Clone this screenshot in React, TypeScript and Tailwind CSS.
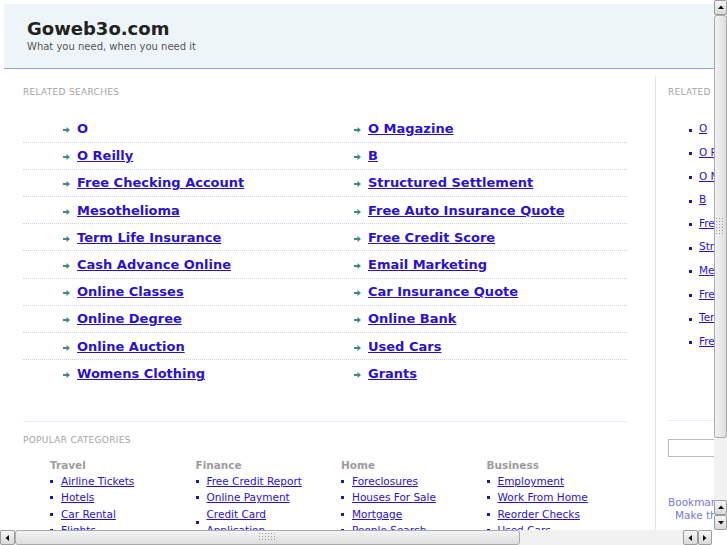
import React from 'react';

const searchRows: [string, string][] = [
  ['O', 'O Magazine'],
  ['O Reilly', 'B'],
  ['Free Checking Account', 'Structured Settlement'],
  ['Mesothelioma', 'Free Auto Insurance Quote'],
  ['Term Life Insurance', 'Free Credit Score'],
  ['Cash Advance Online', 'Email Marketing'],
  ['Online Classes', 'Car Insurance Quote'],
  ['Online Degree', 'Online Bank'],
  ['Online Auction', 'Used Cars'],
  ['Womens Clothing', 'Grants'],
];

const sideLinks = [
  'O',
  'O Reilly',
  'O Magazine',
  'B',
  'Free Checking Account',
  'Structured Settlement',
  'Mesothelioma',
  'Free Auto Insurance Quote',
  'Term Life Insurance',
  'Free Credit Score',
];

const categories = [
  { title: 'Travel', items: ['Airline Tickets', 'Hotels', 'Car Rental', 'Flights'] },
  { title: 'Finance', items: ['Free Credit Report', 'Online Payment', 'Credit Card Application'] },
  { title: 'Home', items: ['Foreclosures', 'Houses For Sale', 'Mortgage', 'People Search'] },
  { title: 'Business', items: ['Employment', 'Work From Home', 'Reorder Checks', 'Used Cars'] },
];

function Arrow() {
  return (
    <svg width="7" height="6" viewBox="0 0 7 6" className="shrink-0 mt-[2px]">
      <rect x="0" y="2" width="4" height="2" fill="#3d8a84" />
      <path d="M3.5 0 L7 3 L3.5 6 Z" fill="#3d8a84" />
    </svg>
  );
}

function SearchCell({ label, first }: { label: string; first?: boolean }) {
  return (
    <div className={`flex items-center gap-[7px] ${first ? 'w-[317px] pl-[40px]' : 'pl-[14px]'}`}>
      <Arrow />
      <a
        href="#"
        className={`text-[13px] leading-[16px] font-bold text-[#2a12cc] whitespace-nowrap ${
          label === 'O' ? 'no-underline' : 'underline'
        }`}
      >
        {label}
      </a>
    </div>
  );
}

// fake browser scrollbar pieces
function ScrollButton({ dir, className = '' }: { dir: 'up' | 'down' | 'left' | 'right'; className?: string }) {
  const paths = {
    up: 'M1 5 L4 1.5 L7 5 Z',
    down: 'M1 2 L4 5.5 L7 2 Z',
    left: 'M5 1 L1.5 4 L5 7 Z',
    right: 'M2 1 L5.5 4 L2 7 Z',
  };
  return (
    <div
      className={`flex items-center justify-center border border-[#9c9c9c] rounded-[2px] bg-gradient-to-b from-[#f6f6f6] to-[#d9d9d9] ${className}`}
    >
      <svg width="8" height="8" viewBox="0 0 8 8">
        <path d={paths[dir]} fill="#111" />
      </svg>
    </div>
  );
}

function Grip({ vertical }: { vertical?: boolean }) {
  const dots = [];
  const cols = vertical ? 3 : 6;
  const rows = vertical ? 6 : 3;
  for (let r = 0; r < rows; r++) {
    for (let c = 0; c < cols; c++) {
      dots.push(<rect key={`${r}-${c}`} x={c * 3} y={r * 3} width="1" height="1" fill="#9a9a9a" />);
    }
  }
  return (
    <svg width={cols * 3} height={rows * 3}>
      {dots}
    </svg>
  );
}

export default function App() {
  return (
    <div className="w-[727px] h-[545px] overflow-hidden flex flex-col bg-white font-['DejaVu_Sans',sans-serif]">
      <div className="flex h-[530px]">
        {/* page */}
        <div className="w-[714px] overflow-hidden">
          <div className="w-[900px] pt-[4px] pl-[4px]">
            {/* header */}
            <div className="h-[65px] bg-[#eef5f8] border-b border-[#8fa2dc] pl-[23px] pt-[14px]">
              <div className="text-[18px] leading-[22px] font-bold text-[#222]">Goweb3o.com</div>
              <div className="text-[10px] leading-[14px] text-[#555]">What you need, when you need it</div>
            </div>

            <div className="flex pt-[7px]">
              {/* main column */}
              <div className="w-[651px] pl-[19px] pr-[28px] pt-[11px]">
                <div className="text-[9px] leading-[11px] text-[#a3a3a3] tracking-[0.3px]">RELATED SEARCHES</div>
                <div className="mt-[17.5px]">
                  {searchRows.map(([a, b], i) => (
                    <div
                      key={a}
                      className={`flex h-[27.2px] pt-[1px] ${
                        i < searchRows.length - 1 ? 'border-b border-dotted border-[#c3d1ee]' : ''
                      }`}
                    >
                      <SearchCell label={a} first />
                      <SearchCell label={b} />
                    </div>
                  ))}
                </div>

                <div className="mt-[34px] border-t border-[#e6edf7]" />
                <div className="mt-[12.5px] text-[9px] leading-[11px] text-[#a3a3a3] tracking-[0.3px]">
                  POPULAR CATEGORIES
                </div>
                <div className="flex pl-[27px] mt-[13px]">
                  {categories.map((cat) => (
                    <div key={cat.title} className="w-[145.5px] shrink-0">
                      <div className="text-[10.5px] leading-[13px] font-bold text-[#9c9c9c]">{cat.title}</div>
                      <ul className="mt-[1px]">
                        {cat.items.map((item) => (
                          <li key={item} className="flex items-center">
                            <span className="w-[3px] h-[3px] bg-[#1c1aa8] shrink-0" />
                            <a
                              href="#"
                              className="ml-[8px] w-[110px] text-[10.5px] leading-[16.5px] text-[#2a12cc] underline"
                            >
                              {item}
                            </a>
                          </li>
                        ))}
                      </ul>
                    </div>
                  ))}
                </div>
              </div>

              {/* side column */}
              <div className="w-[220px] border-l border-[#dfe5f2] pl-[12px] pt-[11px] h-[460px]">
                <div className="text-[9px] leading-[11px] text-[#a3a3a3] tracking-[0.3px]">RELATED</div>
                <ul className="mt-[19.5px] pl-[21px]">
                  {sideLinks.map((l) => (
                    <li key={l} className="flex items-center h-[23.6px]">
                      <span className="w-[3px] h-[3px] bg-[#1c1aa8] shrink-0 mt-[2px]" />
                      <a href="#" className="ml-[7px] text-[10.5px] text-[#2a12cc] underline whitespace-nowrap">
                        {l}
                      </a>
                    </li>
                  ))}
                </ul>
                <div className="mt-[67px] border-t border-[#e6edf7]" />
                <div className="mt-[18px] h-[18px] border border-[#bdbdbd]" />
                <div className="mt-[39px] text-[10.5px] leading-[13px] text-[#7a78d6] whitespace-nowrap">
                  Bookmark this page
                </div>
                <div className="pl-[7px] text-[10.5px] leading-[13px] text-[#7a78d6] whitespace-nowrap">
                  Make this your homepage
                </div>
              </div>
            </div>
          </div>
        </div>

        {/* vertical scrollbar */}
        <div className="w-[13px] flex flex-col bg-[#eeeeee]">
          <ScrollButton dir="up" className="h-[15px]" />
          <div className="h-[423px] border border-[#a9a9a9] rounded-[3px] bg-gradient-to-r from-[#f3f3f3] to-[#dedede] flex items-center justify-center">
            <Grip vertical />
          </div>
          <div className="flex-1 bg-[#f1f1f1]" />
          <ScrollButton dir="up" className="h-[15px]" />
          <ScrollButton dir="down" className="h-[15px]" />
        </div>
      </div>

      {/* horizontal scrollbar */}
      <div className="flex h-[15px] bg-[#eeeeee]">
        <ScrollButton dir="left" className="w-[15px]" />
        <div className="w-[505px] border border-[#a9a9a9] rounded-[3px] bg-gradient-to-b from-[#f3f3f3] to-[#dedede] flex items-center justify-center">
          <Grip />
        </div>
        <div className="flex-1 bg-[#f1f1f1]" />
        <ScrollButton dir="left" className="w-[15px]" />
        <ScrollButton dir="right" className="w-[14px]" />
        <div className="w-[15px] bg-white" />
      </div>
    </div>
  );
}
